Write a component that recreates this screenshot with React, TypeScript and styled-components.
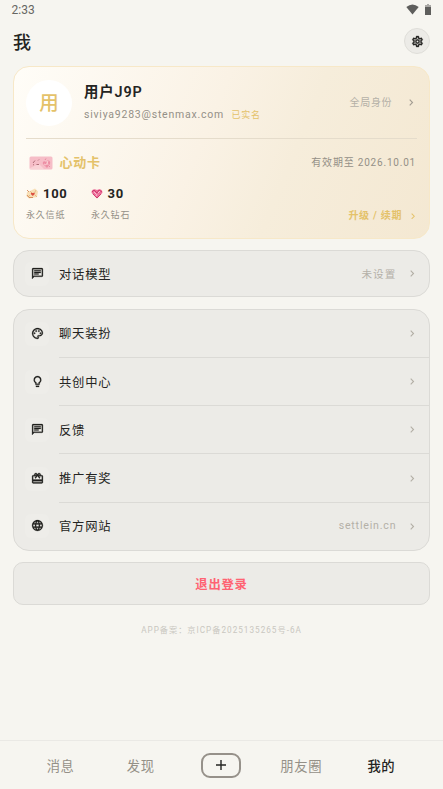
import React from "react";
import styled, { createGlobalStyle } from "styled-components";
import {
  MdOutlineChat,
  MdOutlinePalette,
  MdLightbulbOutline,
  MdOutlineRedeem,
  MdLanguage,
  MdOutlineSettings,
} from "react-icons/md";

const GlobalStyle = createGlobalStyle`
  * { box-sizing: border-box; }
  body {
    margin: 0;
    background: #f6f5f0;
    font-family: Roboto, "Noto Sans CJK SC", sans-serif;
    color: #222220;
  }
`;

const Screen = styled.div`
  width: 443px;
  height: 789px;
  display: flex;
  flex-direction: column;
  overflow: hidden;
`;

const StatusBar = styled.div`
  height: 20px;
  flex: none;
  display: flex;
  align-items: center;
  justify-content: space-between;
  padding: 0 12px 0 11.5px;
`;

const StatusIcons = styled.div`
  display: flex;
  align-items: center;
  gap: 6px;
  height: 17px;
  margin-bottom: 2px;
  svg { display: block; }
`;

const Header = styled.div`
  height: 46px;
  flex: none;
  display: flex;
  align-items: center;
  justify-content: space-between;
  padding: 0 13px 3px;
`;

const SettingsButton = styled.div`
  width: 26px;
  height: 26px;
  border-radius: 50%;
  border: 1px solid #dfded9;
  background: #ecebe7;
  display: flex;
  align-items: center;
  justify-content: center;
  margin-top: -1px;
  svg { stroke-width: 0.7; }
  path[fill="none"] { stroke: none; }
`;

const Label = styled.span<{
  $size: number;
  $color?: string;
  $weight?: number;
  $spacing?: number;
  $drop?: number;
}>`
  font-size: ${(p) => p.$size}px;
  line-height: 1.2;
  color: ${(p) => p.$color ?? "#242422"};
  font-weight: ${(p) => p.$weight ?? 400};
  letter-spacing: ${(p) => p.$spacing ?? 1}px;
  padding-top: ${(p) => p.$drop ?? 0}px;
  white-space: nowrap;
`;

const Content = styled.div`
  flex: 1;
  min-height: 0;
  padding: 0 13px;
  display: flex;
  flex-direction: column;
`;

const ProfileCard = styled.div`
  height: 172.5px;
  flex: none;
  border: 1px solid #f7e8c8;
  border-radius: 16px;
  background: linear-gradient(112.4deg, #fffdf8 0%, #faf2e5 45%, #f6eddb 65%, #f4e8d2 100%);
  padding: 0 12px;
`;

const Identity = styled.div`
  height: 72px;
  display: flex;
  align-items: center;
  border-bottom: 1px solid #e5dccb;
`;

const Avatar = styled.div`
  width: 46px;
  height: 46px;
  border-radius: 50%;
  background: #fff;
  display: flex;
  align-items: center;
  justify-content: center;
`;

const NameBlock = styled.div`
  flex: 1;
  margin-left: 12px;
  display: flex;
  flex-direction: column;
  gap: 8px;
`;

const Inline = styled.div<{ $gap: number; $right?: number }>`
  display: flex;
  align-items: center;
  gap: ${(p) => p.$gap}px;
  padding-right: ${(p) => p.$right ?? 0}px;
  svg { flex: none; }
`;

const Membership = styled.div`
  height: 47px;
  display: flex;
  align-items: center;
  justify-content: space-between;
  padding: 0 1px 0 2.5px;
`;

const Assets = styled.div`
  display: flex;
  align-items: flex-end;
`;

const Asset = styled.div`
  width: 65px;
  display: flex;
  flex-direction: column;
  gap: 8.5px;
`;

const Upgrade = styled.div`
  margin-left: auto;
  display: flex;
  align-items: center;
  gap: 8.5px;
  padding-right: 2.5px;
  margin-bottom: -1.5px;
`;

const Group = styled.div`
  flex: none;
  margin-top: 11.3px;
  border: 1px solid #dbdad6;
  border-radius: 16px;
  background: #ecebe7;
  overflow: hidden;
`;

const Row = styled.div<{ $height: number }>`
  height: ${(p) => p.$height}px;
  display: flex;
  align-items: center;
  padding-left: 11px;
`;

const IconTile = styled.div`
  width: 24px;
  height: 24px;
  border-radius: 6px;
  background: #eeede9;
  display: flex;
  align-items: center;
  justify-content: center;
  color: #20201e;
  svg {
    margin: 0 0 1px;
    stroke-width: 0.5;
  }
  path[fill="none"] { stroke: none; }
`;

const RowBody = styled.div<{ $divided: boolean }>`
  flex: 1;
  height: 100%;
  margin-left: 10px;
  padding-right: 14.5px;
  display: flex;
  align-items: center;
  border-bottom: ${(p) => (p.$divided ? "1px solid #dbdad6" : "none")};
`;

const RowEnd = styled.div`
  margin-left: auto;
  display: flex;
  align-items: center;
  gap: 14px;
`;

const Logout = styled.div`
  flex: none;
  height: 43px;
  margin-top: 11.5px;
  border: 1px solid #dbdad6;
  border-radius: 10px;
  background: #ecebe7;
  display: flex;
  align-items: center;
  justify-content: center;
`;

const Filing = styled.div`
  margin-top: 17px;
  text-align: center;
  line-height: 12px;
`;

const TabBar = styled.div`
  flex: none;
  height: 49px;
  border-top: 1px solid #eae9e5;
  display: grid;
  grid-template-columns: repeat(5, 80.2px);
  justify-content: center;
  align-items: center;
  justify-items: center;
  padding-right: 1px;
`;

const AddButton = styled.div`
  width: 40px;
  height: 25px;
  border: 2px solid #96918a;
  border-radius: 9px;
  display: flex;
  align-items: center;
  justify-content: center;
`;

const Chevron = ({ color = "#b4b0a7", size = 7 }: { color?: string; size?: number }) => (
  <svg width={size * 0.6} height={size} viewBox="0 0 6 10" fill="none">
    <path d="M1 1l4 4-4 4" stroke={color} strokeWidth="1.6" />
  </svg>
);

const HeartCard = () => (
  <svg width="24" height="14" viewBox="0 0 24 14">
    <rect x=".5" y=".5" width="23" height="13" rx="1.5" fill="#f6bdc7" />
    <path d="M1 12L10 8l5 5H1z" fill="#fad2d6" />
    <path d="M4 7l2-2.5M9 4.5l1-1M4 8.5l1 .5M7.5 8.5h2.5" stroke="#9d5963" strokeWidth=".8" fill="none" />
    <path d="M18 12l-4-4c-1-2 1-4 3-2 2-3 5-1 4 2z" fill="#ed8fa5" />
    <path d="M15 8l2 1 2-4M18 5l1 4" stroke="#fbd5d8" strokeWidth=".8" fill="none" />
    <path d="M16 4l1-1.5M21 10l-1 1" stroke="#e27c95" strokeWidth=".8" />
  </svg>
);

const Letter = () => (
  <svg width="13" height="11" viewBox="0 0 13 11">
    <path d="M1 4l3-1 5-2.5 2 2 1 1-1 5.5-8 1.5L.5 8z" fill="#f8dfb6" />
    <path d="M4 3l2 2M10 2L8.5 5M2 9l2-2M11 9L9 7" stroke="#dcae72" strokeWidth=".7" fill="none" />
    <path d="M6.8 8L4.8 6c0-2 2-1 2-1s2-1 2 1z" fill="#dd5141" />
    <path d="M1 2l2 2M1 7l2 2.5h4" stroke="#cf7c48" strokeWidth=".8" fill="none" />
  </svg>
);

const Diamond = () => (
  <svg width="12" height="11" viewBox="0 0 12 11">
    <path d="M6 10.5L.7 5C-.2 2 3 0 6 2c3-2 6 0 5.3 3z" fill="#ec6f9a" />
    <path d="M1 4l2-2 3 3 2-3 3 2M2 6l4 4 4-4" stroke="#cc3468" strokeWidth=".9" fill="none" />
    <path d="M3 4l2 2M7 5l2-2M5 8l1-2" stroke="#ffe5ed" strokeWidth=".7" />
  </svg>
);

const menu = [
  { label: "聊天装扮", icon: MdOutlinePalette },
  { label: "共创中心", icon: MdLightbulbOutline },
  { label: "反馈", icon: MdOutlineChat },
  { label: "推广有奖", icon: MdOutlineRedeem },
  { label: "官方网站", icon: MdLanguage, value: "settlein.cn" },
];

const GOLD = "#e4c26a";
const MUTED = "#949087";
const FAINT = "#b4b0a7";

type MenuRowProps = {
  label: string;
  icon: React.ComponentType<{ size?: number }>;
  value?: string;
  height: number;
  divided?: boolean;
};

const MenuRow = ({ label, icon: Icon, value, height, divided = false }: MenuRowProps) => (
  <Row $height={height}>
    <IconTile>
      <Icon size={13} />
    </IconTile>
    <RowBody $divided={divided}>
      <Label $size={12.3} $spacing={0.8} $drop={3}>{label}</Label>
      <RowEnd>
        {value && (
          <Label $size={10.6} $spacing={value === "未设置" ? 1 : 0.8} $color={FAINT} $drop={value === "未设置" ? 3 : 0}>
            {value}
          </Label>
        )}
        <Chevron />
      </RowEnd>
    </RowBody>
  </Row>
);

export default function App() {
  return (
    <>
      <GlobalStyle />
      <Screen>
        <StatusBar>
          <Label $size={12} $color="#666663" $spacing={0}>2:33</Label>
          <StatusIcons>
            <svg width="13" height="11" viewBox="0 0 13 11">
              <path d="M.3 3Q6.5-2 12.7 3L6.5 10.6z" fill="#5e5e5c" />
            </svg>
            <svg width="6" height="11" viewBox="0 0 6 11">
              <path d="M2 0h2v1h2v2H0V1h2z" fill="#aaa9a6" />
              <path d="M0 3h6v8H0z" fill="#5e5e5c" />
            </svg>
          </StatusIcons>
        </StatusBar>
        <Header>
          <Label $size={18} $weight={500} $drop={2}>我</Label>
          <SettingsButton>
            <MdOutlineSettings size={13} />
          </SettingsButton>
        </Header>
        <Content>
          <ProfileCard>
            <Identity>
              <Avatar>
                <Label $size={19.5} $weight={500} $color={GOLD} $spacing={0} $drop={3}>用</Label>
              </Avatar>
              <NameBlock>
                <Label $size={14.4} $weight={600} $spacing={0.9}>用户J9P</Label>
                <Inline $gap={7.5}>
                  <Label $size={10.5} $spacing={0.77} $color={MUTED}>siviya9283@stenmax.com</Label>
                  <Label $size={9} $spacing={0.7} $color={GOLD} $drop={1}>已实名</Label>
                </Inline>
              </NameBlock>
              <Inline $gap={17} $right={3.5}>
                <Label $size={10} $spacing={0.7} $color={FAINT}>全局身份</Label>
                <Chevron color="#a39d92" />
              </Inline>
            </Identity>
            <Membership>
              <Inline $gap={7}>
                <HeartCard />
                <Label $size={13} $weight={600} $spacing={0.8} $color={GOLD} $drop={1}>心动卡</Label>
              </Inline>
              <Label $size={10} $spacing={0.8} $color={MUTED} $drop={1}>有效期至 2026.10.01</Label>
            </Membership>
            <Assets>
              <Asset>
                <Inline $gap={4}>
                  <Letter />
                  <Label $size={13} $weight={700} $spacing={0.7}>100</Label>
                </Inline>
                <Label $size={9} $color={MUTED} $spacing={0.8}>永久信纸</Label>
              </Asset>
              <Asset>
                <Inline $gap={4.5}>
                  <Diamond />
                  <Label $size={13} $weight={700} $spacing={0.7}>30</Label>
                </Inline>
                <Label $size={9} $color={MUTED} $spacing={0.8}>永久钻石</Label>
              </Asset>
              <Upgrade>
                <Label $size={10} $weight={600} $spacing={0.7} $color={GOLD} $drop={1}>升级 / 续期</Label>
                <Chevron color={GOLD} size={6.5} />
              </Upgrade>
            </Assets>
          </ProfileCard>
          <Group>
            <MenuRow label="对话模型" icon={MdOutlineChat} value="未设置" height={45.5} />
          </Group>
          <Group>
            {menu.map((item, i) => (
              <MenuRow key={item.label} {...item} height={i === 4 ? 47.1 : 48.3} divided={i < 4} />
            ))}
          </Group>
          <Logout>
            <Label $size={12.3} $weight={600} $spacing={0.8} $color="#ff6372" $drop={3}>退出登录</Label>
          </Logout>
          <Filing>
            <Label $size={8.2} $color="#c9c7c0">APP备案：京ICP备2025135265号-6A</Label>
          </Filing>
        </Content>
        <TabBar>
          <Label $size={13.3} $spacing={0.7} $color={MUTED} $drop={3}>消息</Label>
          <Label $size={13.3} $spacing={0.7} $color={MUTED} $drop={3}>发现</Label>
          <AddButton>
            <svg width="10" height="10" viewBox="0 0 10 10">
              <path d="M5 0v10M0 5h10" stroke="#242422" strokeWidth="1.4" />
            </svg>
          </AddButton>
          <Label $size={13.3} $spacing={0.7} $color={MUTED} $drop={3}>朋友圈</Label>
          <Label $size={13.3} $spacing={0.7} $weight={500} $drop={3}>我的</Label>
        </TabBar>
      </Screen>
    </>
  );
}
